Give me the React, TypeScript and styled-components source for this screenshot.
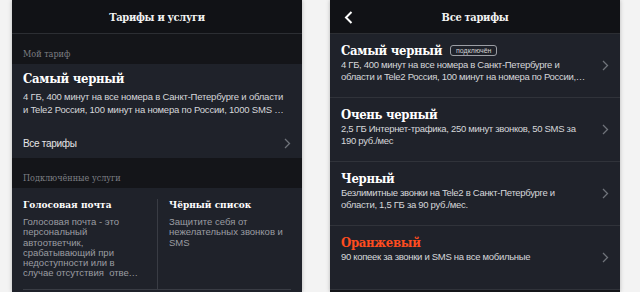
import React from "react";
import styled, { createGlobalStyle } from "styled-components";

const GlobalStyle = createGlobalStyle`
    html, body {
        margin: 0;
        padding: 0;
        background: #f3f3f3;
    }
    * { box-sizing: border-box; }
`;

const serif = `"DejaVu Serif Condensed", "DejaVu Serif", "Liberation Serif", serif`;
const sans = `"Liberation Sans", Arial, sans-serif`;

const tariffs = [
    {
        name: "Самый черный",
        desc: "4 ГБ, 400 минут на все номера в Санкт-Петербурге и области и Tele2 Россия, 100 минут на номера по России, 1000 SMS за 250 руб./мес",
        active: true,
    },
    {
        name: "Очень черный",
        desc: "2,5 ГБ Интернет-трафика, 250 минут звонков, 50 SMS за 190 руб./мес",
    },
    {
        name: "Черный",
        desc: "Безлимитные звонки на Tele2 в Санкт-Петербурге и области, 1,5 ГБ за 90 руб./мес.",
    },
    {
        name: "Оранжевый",
        desc: "90 копеек за звонки и SMS на все мобильные",
        orange: true,
    },
];

const Chevron = () => (
    <svg width="7" height="11" viewBox="0 0 7 11">
        <path d="M1 1l4.5 4.5L1 10" fill="none" stroke="#6f737a" strokeWidth="1.3" />
    </svg>
);

const BackArrow = () => (
    <svg width="9" height="13" viewBox="0 0 9 13">
        <path d="M7.5 1L2 6.5 7.5 12" fill="none" stroke="#fff" strokeWidth="2" />
    </svg>
);

const App = () => {
    return (
        <>
            <GlobalStyle />
            <Page>
                <Phone>
                    <Header>
                        <HeaderTitle>Тарифы и услуги</HeaderTitle>
                    </Header>
                    <SectionLabel>Мой тариф</SectionLabel>
                    <TariffCard>
                        <TariffName>Самый черный</TariffName>
                        <TariffDesc>
                            4 ГБ, 400 минут на все номера в Санкт-Петербурге и области и Tele2 Россия, 100 минут на номера по России, 1000 SMS за 250 руб./мес
                        </TariffDesc>
                        <LinkRow>
                            <span>Все тарифы</span>
                            <Chevron />
                        </LinkRow>
                    </TariffCard>
                    <SectionLabel>Подключённые услуги</SectionLabel>
                    <Services>
                        <ServiceRow>
                            <Service>
                                <ServiceName>Голосовая почта</ServiceName>
                                <ServiceDesc>
                                    Голосовая почта - это персональный автоответчик, срабатывающий при недоступности или в случае отсутствия&nbsp; ответа абонента
                                </ServiceDesc>
                            </Service>
                            <Service $divided>
                                <ServiceName>Чёрный список</ServiceName>
                                <ServiceDesc>Защитите себя от нежелательных звонков и SMS</ServiceDesc>
                            </Service>
                        </ServiceRow>
                    </Services>
                </Phone>
                <Phone>
                    <Header>
                        <BackButton>
                            <BackArrow />
                        </BackButton>
                        <HeaderTitle>Все тарифы</HeaderTitle>
                    </Header>
                    {tariffs.map((t, idx) => (
                        <TariffItem key={idx}>
                            <ItemText>
                                <ItemTitleRow>
                                    <ItemName $orange={!!t.orange}>{t.name}</ItemName>
                                    {t.active ? <Badge>подключён</Badge> : null}
                                </ItemTitleRow>
                                <ItemDesc>{t.desc}</ItemDesc>
                            </ItemText>
                            <Chevron />
                        </TariffItem>
                    ))}
                </Phone>
            </Page>
        </>
    );
};
export default App;

const Page = styled.div`
    display: flex;
    gap: 28px;
    padding-left: 12px;
    height: 292px;
    overflow: hidden;
`;

const Phone = styled.div`
    display: flex;
    flex-direction: column;
    width: 290px;
    height: 292px;
    overflow: hidden;
    background-color: #141519;
    box-shadow: 0 0 4px rgba(0, 0, 0, 0.25);
`;

const Header = styled.div`
    display: flex;
    position: relative;
    justify-content: center;
    align-items: center;
    flex-shrink: 0;
    height: 34px;
    background-color: #111216;
    border-bottom: 1px solid #2c2e33;
`;

const HeaderTitle = styled.div`
    font-family: ${serif};
    font-stretch: condensed;
    font-weight: bold;
    font-size: 11px;
    letter-spacing: -0.3px;
    color: #f2f2f2;
    padding-top: 1px;
`;

const BackButton = styled.div`
    display: flex;
    position: absolute;
    left: 14px;
    top: 11px;
`;

const SectionLabel = styled.div`
    display: flex;
    align-items: flex-end;
    flex-shrink: 0;
    height: 30px;
    padding: 0 11px 5px;
    font-family: ${serif};
    font-stretch: condensed;
    font-size: 9px;
    color: #7d7f84;
`;

const TariffCard = styled.div`
    display: flex;
    flex-direction: column;
    flex-shrink: 0;
    height: 94px;
    padding: 6px 11px 0;
    background-color: #1f222a;
`;

const TariffName = styled.div`
    font-family: ${serif};
    font-stretch: condensed;
    font-weight: bold;
    font-size: 13px;
    letter-spacing: -0.3px;
    line-height: 17px;
    color: #fff;
`;

const TariffDesc = styled.div`
    margin-top: 3px;
    padding-right: 5px;
    font-family: ${sans};
    font-size: 9.5px;
    letter-spacing: -0.2px;
    line-height: 13px;
    color: #d6d7da;
    display: -webkit-box;
    -webkit-line-clamp: 2;
    -webkit-box-orient: vertical;
    overflow: hidden;
`;

const LinkRow = styled.div`
    display: flex;
    justify-content: space-between;
    align-items: center;
    height: 14px;
    margin-top: 20px;
    font-family: ${sans};
    font-size: 10px;
    letter-spacing: -0.3px;
    color: #e6e6e6;
`;

const Services = styled.div`
    display: flex;
    flex-direction: column;
    flex: 1;
    padding: 11px 11px 0;
    background-color: #1f222a;
`;

const ServiceRow = styled.div`
    display: grid;
    grid-template-columns: 134px 1fr;
    flex-shrink: 0;
    height: 91px;
    border-bottom: 1px solid #393c44;
`;

const Service = styled.div<{ $divided?: boolean }>`
    display: flex;
    flex-direction: column;
    padding-left: ${({ $divided }) => ($divided ? "11px" : "0")};
    padding-right: ${({ $divided }) => ($divided ? "0" : "18px")};
    border-left: ${({ $divided }) => ($divided ? "1px solid #393c44" : "none")};
`;

const ServiceName = styled.div`
    font-family: ${serif};
    font-stretch: condensed;
    font-weight: bold;
    font-size: 10px;
    line-height: 12px;
    color: #fff;
`;

const ServiceDesc = styled.div`
    margin-top: 6px;
    font-family: ${sans};
    font-size: 9.5px;
    line-height: 10.3px;
    color: #9b9da2;
    display: -webkit-box;
    -webkit-line-clamp: 6;
    -webkit-box-orient: vertical;
    overflow: hidden;
`;

const TariffItem = styled.div`
    display: flex;
    align-items: center;
    justify-content: space-between;
    gap: 14px;
    flex-shrink: 0;
    height: 64px;
    padding: 0 11px;
    background-color: #1f222a;
    border-bottom: 1px solid #30333a;
`;

const ItemText = styled.div`
    display: flex;
    flex-direction: column;
    align-self: flex-start;
    padding-top: 8px;
    flex: 1;
    min-width: 0;
`;

const ItemTitleRow = styled.div`
    display: flex;
    align-items: center;
    gap: 8px;
`;

const ItemName = styled.div<{ $orange: boolean }>`
    font-family: ${serif};
    font-stretch: condensed;
    font-weight: bold;
    font-size: 13px;
    letter-spacing: -0.3px;
    line-height: 17px;
    color: ${({ $orange }) => ($orange ? "#ff4c1f" : "#fff")};
`;

const Badge = styled.div`
    display: flex;
    align-items: center;
    height: 11px;
    padding: 0 5px;
    border: 1px solid #9b9ea4;
    border-radius: 3px;
    font-family: ${sans};
    font-size: 7px;
    color: #d0d0d0;
`;

const ItemDesc = styled.div`
    font-family: ${sans};
    font-size: 9.5px;
    letter-spacing: -0.3px;
    line-height: 12px;
    color: #d6d7da;
    display: -webkit-box;
    -webkit-line-clamp: 2;
    -webkit-box-orient: vertical;
    overflow: hidden;
`;
